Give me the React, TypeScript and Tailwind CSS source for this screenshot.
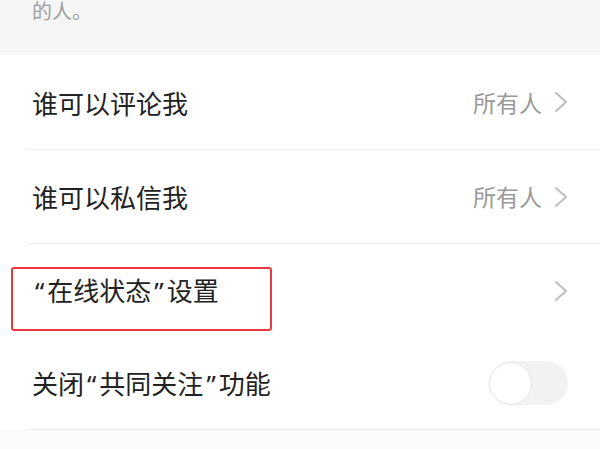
import React from "react";

const font = { fontFamily: '"Noto Sans CJK SC", "Noto Sans", sans-serif' };
const qf = { fontFamily: '"Noto Sans", "Liberation Sans", sans-serif' };

function Chevron() {
  return (
    <svg width="14" height="22" viewBox="0 0 14 22" fill="none">
      <polyline points="2,2 12,11 2,20" stroke="#bdbdbd" strokeWidth="2" strokeLinecap="round" strokeLinejoin="round" />
    </svg>
  );
}

function Sep() {
  return <div className="ml-[27px] h-px bg-[#ebebeb]" />;
}

function Q({ c }: { c: string }) {
  return (
    <span style={qf} className="inline-block px-[3px]">
      {c}
    </span>
  );
}

export default function App() {
  return (
    <div className="w-[600px] h-[449px] overflow-hidden bg-white" style={font}>
      <div className="h-[55px] bg-[#f5f5f5] px-[32px] overflow-hidden">
        <div className="mt-[-3px] text-[20px] leading-[28px] text-[#a0a0a0]">的人。</div>
      </div>
      <div className="h-[94px] px-[32px] flex items-center justify-between">
        <span className="text-[26px] text-[#222]">谁可以评论我</span>
        <div className="flex items-center gap-[12px]">
          <span className="text-[23px] text-[#999]">所有人</span>
          <Chevron />
        </div>
      </div>
      <Sep />
      <div className="h-[93px] px-[32px] flex items-center justify-between">
        <span className="text-[26px] text-[#222]">谁可以私信我</span>
        <div className="flex items-center gap-[12px]">
          <span className="text-[23px] text-[#999]">所有人</span>
          <Chevron />
        </div>
      </div>
      <Sep />
      <div className="relative h-[93px] px-[32px] flex items-center justify-between">
        <span className="text-[26px] text-[#222]">
          <Q c="“" />在线状态<Q c="”" />设置
        </span>
        <Chevron />
        <div className="absolute left-[11px] top-[23px] w-[261px] h-[64px] border-2 border-[#e8383d] rounded-[3px]" />
      </div>
      <div className="h-[92px] px-[32px] flex items-center justify-between">
        <span className="text-[26px] text-[#222]">
          关闭<Q c="“" />共同关注<Q c="”" />功能
        </span>
        <div className="w-[79px] h-[44px] rounded-full bg-[#f2f2f2] flex items-center">
          <div className="w-[43px] h-[43px] rounded-full bg-white border border-[#e4e4e4]" />
        </div>
      </div>
      <Sep />
      <div className="h-[19px] bg-[#fcfcfc]" />
    </div>
  );
}
